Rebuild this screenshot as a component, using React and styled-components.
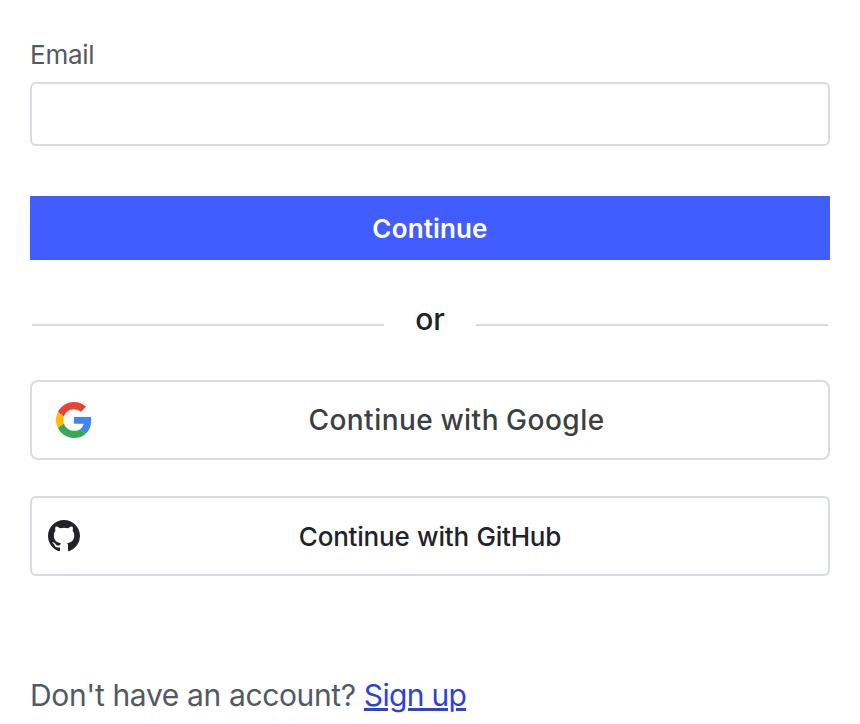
import React from "react";
import styled, { createGlobalStyle } from "styled-components";

const GlobalStyle = createGlobalStyle`
  * { box-sizing: border-box; }
  body { margin: 0; background: #fff; font-family: Inter, "Liberation Sans", sans-serif; }
`;

const Form = styled.form`
  display: flex;
  flex-direction: column;
  height: 724px;
  overflow: hidden;
  padding: 39px 30px 0;
`;

const Label = styled.label`
  height: 43px;
  font-size: 26px;
  line-height: 32px;
  letter-spacing: -0.25px;
  color: #52595f;
`;

const Input = styled.input`
  height: 64px;
  width: 100%;
  border: 2px solid #d7dce3;
  border-radius: 6px;
  background: #fff;
  outline: none;
  font: inherit;
`;

const Submit = styled.button`
  height: 64px;
  margin-top: 50px;
  padding: 2px 0 0;
  border: 0;
  background: #425dff;
  color: #fff;
  font: 600 26px/32px Inter, sans-serif;
  letter-spacing: 0.15px;
`;

const Divider = styled.div`
  display: flex;
  align-items: center;
  height: 40px;
  margin: 39px 2px 0;
  font-size: 30px;
  line-height: 40px;
  color: #212329;
`;

const Rule = styled.span`
  flex: 1;
  height: 2px;
  margin-top: 12px;
  background: #d7dce1;
`;

const DividerText = styled.span`
  width: 92px;
  text-align: center;
  font-weight: 450;
`;

const Provider = styled.button`
  display: flex;
  align-items: center;
  height: 80px;
  margin-top: ${(p) => p.$top}px;
  padding: 0 ${(p) => p.$pad}px;
  border: 2px solid ${(p) => p.$border};
  border-radius: ${(p) => p.$radius}px;
  background: #fff;
  color: ${(p) => p.$color};
  font: 500 ${(p) => p.$size}px/36px Inter, sans-serif;
  letter-spacing: ${(p) => p.$spacing}px;
  word-spacing: ${(p) => p.$words}px;
  svg { flex: none; }
`;

const ProviderText = styled.span`
  flex: 1;
  text-align: center;
  padding: ${(p) => p.$padding};
`;

const Footer = styled.p`
  margin: 99px 0 0;
  font-size: 30px;
  line-height: 40px;
  letter-spacing: -0.36px;
  color: #52595f;
  white-space: nowrap;
`;

const Link = styled.a`
  color: #2e42d8;
  letter-spacing: -0.7px;
  text-decoration: underline;
`;

const GoogleLogo = () => (
  <svg width="36" height="36" viewBox="0 0 48 48" aria-hidden="true">
    <path fill="#EA4335" d="M24 9.5c3.54 0 6.71 1.22 9.21 3.6l6.85-6.85C35.9 2.38 30.47 0 24 0 14.62 0 6.51 5.38 2.56 13.22l7.98 6.19C12.43 13.72 17.74 9.5 24 9.5z" />
    <path fill="#4285F4" d="M46.98 24.55c0-1.57-.15-3.09-.38-4.55H24v9.02h12.94c-.58 2.96-2.26 5.48-4.78 7.18l7.73 6c4.51-4.18 7.09-10.36 7.09-17.65z" />
    <path fill="#FBBC05" d="M10.53 28.59c-.48-1.45-.76-2.99-.76-4.59s.27-3.14.76-4.59l-7.98-6.19C.92 16.46 0 20.12 0 24c0 3.88.92 7.54 2.56 10.78l7.97-6.19z" />
    <path fill="#34A853" d="M24 48c6.48 0 11.93-2.13 15.89-5.81l-7.73-6c-2.15 1.45-4.92 2.3-8.16 2.3-6.26 0-11.57-4.22-13.47-9.91l-7.98 6.19C6.51 42.62 14.62 48 24 48z" />
  </svg>
);

const GitHubLogo = () => (
  <svg width="32" height="32" viewBox="0 0 16 16" fill="#212329" aria-hidden="true">
    <path d="M8 0C3.58 0 0 3.58 0 8c0 3.54 2.29 6.53 5.47 7.59.4.07.55-.17.55-.38 0-.19-.01-.82-.01-1.49-2.01.37-2.53-.49-2.69-.94-.09-.23-.48-.94-.82-1.13-.28-.15-.68-.52-.01-.53.63-.01 1.08.58 1.23.82.72 1.21 1.87.87 2.33.66.07-.52.28-.87.51-1.07-1.78-.2-3.64-.89-3.64-3.95 0-.87.31-1.59.82-2.15-.08-.2-.36-1.02.08-2.12 0 0 .67-.21 2.2.82.64-.18 1.32-.27 2-.27s1.36.09 2 .27c1.53-1.04 2.2-.82 2.2-.82.44 1.1.16 1.92.08 2.12.51.56.82 1.27.82 2.15 0 3.07-1.87 3.75-3.65 3.95.29.25.54.73.54 1.48 0 1.07-.01 1.93-.01 2.2 0 .21.15.46.55.38A8.01 8.01 0 0 0 16 8c0-4.42-3.58-8-8-8z" />
  </svg>
);

export default function App() {
  return (
    <>
      <GlobalStyle />
      <Form onSubmit={(e) => e.preventDefault()}>
        <Label htmlFor="email">Email</Label>
        <Input id="email" type="email" />
        <Submit>Continue</Submit>
        <Divider>
          <Rule />
          <DividerText>or</DividerText>
          <Rule />
        </Divider>
        <Provider type="button" $top={41} $pad={24} $radius={8} $border="#dadce0" $color="#3c4043" $size={28} $spacing={0.48} $words={-0.8}>
          <GoogleLogo />
          <ProviderText $padding="0 0 0 17px">Continue with Google</ProviderText>
        </Provider>
        <Provider type="button" $top={36} $pad={16} $radius={6} $border="#d7dce3" $color="#212329" $size={26} $spacing={-0.2} $words={0.8}>
          <GitHubLogo />
          <ProviderText $padding="2px 32px 0 0">Continue with GitHub</ProviderText>
        </Provider>
        <Footer>
          Don't have an account? <Link href="#signup">Sign up</Link>
        </Footer>
      </Form>
    </>
  );
}
